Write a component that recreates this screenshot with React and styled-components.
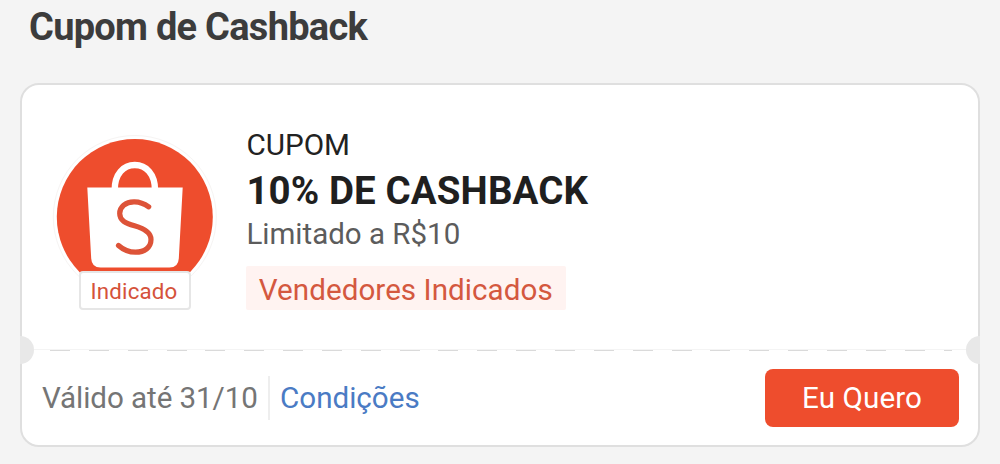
import React from "react";
import styled, { createGlobalStyle } from "styled-components";

const App = () => {
    return (
        <>
            <GlobalStyle />
            <Page>
                <Title>Cupom de Cashback</Title>
                <Coupon>
                    <CouponBody>
                        <Seller>
                            <BagLogo />
                            <SellerBadge>Indicado</SellerBadge>
                        </Seller>
                        <Info>
                            <Kind>CUPOM</Kind>
                            <Discount>10% DE CASHBACK</Discount>
                            <Limit>Limitado a R$10</Limit>
                            <Tag>Vendedores Indicados</Tag>
                        </Info>
                    </CouponBody>
                    <Perforation>
                        <Notch $side="left" />
                        <Notch $side="right" />
                    </Perforation>
                    <CouponFooter>
                        <Validity>Válido até 31/10</Validity>
                        <Conditions href="#">Condições</Conditions>
                        <WantButton type="button">Eu Quero</WantButton>
                    </CouponFooter>
                </Coupon>
            </Page>
        </>
    );
};

const BagLogo = () => (
    <svg width="166" height="166" viewBox="0 0 166 166" fill="none">
        <circle cx="82.8" cy="83" r="81.5" stroke="#f6f4f3" />
        <circle cx="82.8" cy="83" r="78" fill="#ee4d2d" />
        <path
            d="M62.7 56 C62.7 40 71.5 31 82.8 31 C94.1 31 103 40 103 56"
            stroke="#fff"
            strokeWidth="6.4"
        />
        <path
            d="M35.3 53.6 H130.7 L126.8 124.5 Q126.3 133.6 117.5 133.6 H48.5 Q39.7 133.6 39.2 124.5 Z"
            fill="#fff"
        />
        <path
            d="M96.7 72.8 C91 68.7 86.5 67.6 81.8 67.8 C73.5 68 67.7 73 67.7 79.5 C67.7 86.5 73.5 89.2 82.5 91.8 C93 94.8 99 98.5 99 105.5 C99 113.5 92.5 118.2 83.5 118.2 C76.5 118.2 71 115.5 66.5 111.5"
            stroke="#dd5338"
            strokeWidth="5.2"
            strokeLinecap="round"
        />
    </svg>
);

export default App;

const GlobalStyle = createGlobalStyle`
    * {
        box-sizing: border-box;
    }
    body {
        margin: 0;
        background: #f4f4f4;
        font-family: Roboto, "Liberation Sans", sans-serif;
    }
`;

const Page = styled.main`
    height: 464px;
    padding: 5px 20px 0;
`;

const Title = styled.h1`
    margin: 0 0 34px;
    padding-left: 9px;
    font-size: 38px;
    line-height: 44px;
    font-weight: 700;
    letter-spacing: -0.73px;
    color: #3c3c3c;
`;

const Coupon = styled.section`
    height: 364px;
    border: 2px solid #dfdfdf;
    border-radius: 19px;
    background: #fff;
`;

const CouponBody = styled.div`
    display: flex;
    height: 264px;
    padding: 43px 30px 0;
`;

const Seller = styled.div`
    display: flex;
    flex-direction: column;
    align-items: center;
    width: 166px;
    padding-top: 6px;

    svg {
        flex: none;
    }
`;

const SellerBadge = styled.span`
    z-index: 1;
    width: 112px;
    height: 39px;
    margin-top: -29px;
    padding-right: 2px;
    border: 2px solid #e6e6e6;
    border-radius: 4px;
    background: #fff;
    font-size: 22.3px;
    line-height: 37px;
    letter-spacing: 0.2px;
    text-align: center;
    color: #d5523a;
`;

const Info = styled.div`
    display: flex;
    flex-direction: column;
    align-items: flex-start;
    padding-left: 28.4px;
`;

const Kind = styled.span`
    font-size: 29.7px;
    line-height: 34px;
    color: #222;
`;

const Discount = styled.strong`
    margin-top: 7px;
    font-size: 38.5px;
    line-height: 44px;
    font-weight: 700;
    letter-spacing: 0.1px;
    color: #1f1f1f;
`;

const Limit = styled.span`
    margin-top: 4px;
    font-size: 29.5px;
    line-height: 34px;
    color: #5c5c5c;
`;

const Tag = styled.span`
    height: 44px;
    margin-top: 15px;
    padding: 0 13px 0 12.4px;
    border-radius: 2px;
    background: #fff3f1;
    font-size: 29.6px;
    line-height: 48px;
    letter-spacing: 0.05px;
    color: #d4583f;
`;

const Perforation = styled.div`
    position: relative;
    height: 2px;
    margin: 0 -2px;
    background: repeating-linear-gradient(
            to right,
            #dadada 0 20px,
            transparent 20px 38.85px
        )
        30px 1px / 902px 1px no-repeat,
        linear-gradient(#f4f4f4, #f4f4f4) 14px 0 / 932px 1px no-repeat;
`;

/* half circle punched out of the ticket edge */
const Notch = styled.span`
    position: absolute;
    top: -13.5px;
    ${({ $side }) => $side}: 0;
    width: 14px;
    height: 28px;
    border-radius: ${({ $side }) =>
        $side === "left" ? "0 14px 14px 0" : "14px 0 0 14px"};
    background: #e8e8e8;
`;

const CouponFooter = styled.footer`
    display: flex;
    align-items: center;
    height: 94px;
    padding: 0 19px 0 20px;
    font-size: 29.6px;
    line-height: 44px;
`;

const Validity = styled.span`
    width: 228px;
    border-right: 2px solid #eee;
    letter-spacing: -0.08px;
    white-space: nowrap;
    color: #757575;
`;

const Conditions = styled.a`
    margin-left: 10px;
    text-decoration: none;
    color: #4a7bc4;
`;

const WantButton = styled.button`
    width: 194px;
    height: 58px;
    margin-left: auto;
    padding: 0;
    border: 0;
    border-radius: 8px;
    background: #ee4d2d;
    font: inherit;
    letter-spacing: 0.1px;
    color: #fff;
    cursor: pointer;
`;
